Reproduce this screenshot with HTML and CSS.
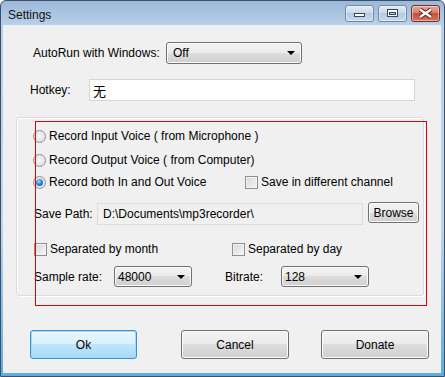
FILE: index.html
```html
<!DOCTYPE html>
<html lang="en">
<head>
    <meta charset="UTF-8">
    <title>Settings</title>
    <link rel="stylesheet" href="styles.css">
</head>
<body>
    <div class="window">
        <div class="titlebar">
            <span class="title">Settings</span>
            <div class="caption-buttons">
                <div class="cap">
                    <svg width="27" height="15" viewBox="0 0 27 15"><rect x="8.5" y="7.5" width="10" height="3" fill="#fff" stroke="#34475c"/></svg>
                </div>
                <div class="cap">
                    <svg width="27" height="15" viewBox="0 0 27 15"><rect x="8.5" y="3.5" width="10" height="7" fill="#fff" stroke="#34475c"/><rect x="10.5" y="6.5" width="6" height="2" fill="#b9cce2" stroke="#34475c"/></svg>
                </div>
                <div class="cap close">
                    <svg width="27" height="15" viewBox="0 0 27 15"><path d="M8 3.5 L19 11 M19 3.5 L8 11" stroke="#5a1e16" stroke-width="4.5"/><path d="M8 3.5 L19 11 M19 3.5 L8 11" stroke="#fff" stroke-width="2.5"/></svg>
                </div>
            </div>
        </div>

        <div class="client">
            <div class="autorun-row">
                <span class="autorun-label">AutoRun with Windows:</span>
                <div class="combo combo-autorun"><span class="combo-text">Off</span><span class="arrow"></span></div>
            </div>

            <div class="hotkey-row">
                <span class="hotkey-label">Hotkey:</span>
                <div class="textbox hotkey-box">无</div>
            </div>

            <div class="group">
                <div class="opt-row">
                    <span class="radio"></span>Record Input Voice ( from Microphone )
                </div>
                <div class="opt-row">
                    <span class="radio"></span>Record Output Voice ( from Computer)
                </div>
                <div class="opt-row short">
                    <div class="both-cell"><span class="radio checked"></span>Record both In and Out Voice</div>
                    <span class="check"></span>Save in different channel
                </div>

                <div class="path-row">
                    <span class="path-label">Save Path:</span>
                    <div class="textbox path-box">D:\Documents\mp3recorder\</div>
                    <div class="btn browse">Browse</div>
                </div>

                <div class="check-row">
                    <div class="month-cell"><span class="check"></span>Separated by month</div>
                    <span class="check"></span>Separated by day
                </div>

                <div class="rate-row">
                    <span class="rate-label">Sample rate:</span>
                    <div class="combo combo-rate"><span class="combo-text">48000</span><span class="arrow"></span></div>
                    <span class="bitrate-label">Bitrate:</span>
                    <div class="combo combo-bitrate"><span class="combo-text">128</span><span class="arrow"></span></div>
                </div>
            </div>

            <div class="button-row">
                <div class="btn btn-default ok">Ok</div>
                <div class="btn cancel">Cancel</div>
                <div class="btn donate">Donate</div>
            </div>

            <!-- marcação vermelha por cima do grupo -->
            <div class="marker"></div>
        </div>
    </div>
</body>
</html>
```

FILE: styles.css
```css
body {
    margin: 0;
    font-family: "Liberation Sans", Arial, sans-serif;
    font-size: 12px;
    color: #000;
    background: #fff;
}

.window {
    width: 445px;
    height: 377px;
    box-sizing: border-box;
    border: 1px solid #3d5067;
    border-radius: 6px 6px 0 0;
    background: linear-gradient(#9db8d7, #b8d0e9 24px, #bfd5ec 60%, #5aaee3);
    display: flex;
    flex-direction: column;
}

/* barra de título */
.titlebar {
    height: 24px;
    display: flex;
    justify-content: space-between;
    padding: 0 4px 0 7px;
}

.title {
    padding-top: 7px;
    font-size: 12px;
    color: #111;
}

.caption-buttons {
    display: flex;
    gap: 4px;
    padding-top: 4px;
}

.cap {
    width: 29px;
    height: 17px;
    box-sizing: border-box;
    border: 1px solid #6f87a5;
    border-radius: 3px;
    background: linear-gradient(#e2ebf5, #cad9ea 45%, #b5c9e0 50%, #c8daee);
    box-shadow: inset 0 0 0 1px rgba(255, 255, 255, 0.45);
}

.cap svg {
    display: block;
}

.cap.close {
    border-color: #6e2f28;
    background: linear-gradient(#e8a595, #d5806e 45%, #c4513b 50%, #d6735b);
}

/* área do cliente */
.client {
    flex: 1;
    margin: 0 3px 3px 2px;
    background: #f0f0f0;
    position: relative;
    display: flex;
    flex-direction: column;
}

.autorun-row {
    display: flex;
    align-items: center;
    height: 22px;
    margin-top: 17px;
    padding-left: 30px;
}

.autorun-label {
    width: 133px;
}

.combo {
    box-sizing: border-box;
    height: 22px;
    display: flex;
    align-items: center;
    border: 1px solid #707070;
    border-radius: 3px;
    background: linear-gradient(#f2f2f2, #ebebeb 50%, #dddddd 50%, #cfcfcf);
    box-shadow: inset 0 0 0 1px #fbfbfb;
}

.combo-text {
    flex: 1;
}

.arrow {
    width: 0;
    height: 0;
    border-left: 4px solid transparent;
    border-right: 4px solid transparent;
    border-top: 4px solid #000;
    margin-right: 6px;
}

.combo-autorun {
    width: 136px;
    padding-left: 6px;
}

.hotkey-row {
    display: flex;
    align-items: center;
    height: 22px;
    margin-top: 15px;
    padding-left: 27px;
}

.hotkey-label {
    width: 59px;
}

.textbox {
    box-sizing: border-box;
    height: 22px;
    display: flex;
    align-items: center;
    border: 1px solid #d6d6d6;
}

.hotkey-box {
    width: 326px;
    padding-left: 3px;
    background: #fff;
    font-family: "Noto Sans CJK SC", "Liberation Sans", sans-serif;
    font-size: 13px;
}

/* grupo com as opções de gravação */
.group {
    box-sizing: border-box;
    width: 408px;
    height: 179px;
    margin: 16px 0 0 13px;
    padding: 6px 0 0 16px;
    border: 1px solid #d5dfe5;
    border-radius: 3px;
    box-shadow: inset 1px 1px 0 #fff, 1px 1px 0 #fff;
}

.opt-row {
    display: flex;
    align-items: center;
    height: 24px;
}

.opt-row.short {
    height: 20px;
}

.both-cell {
    width: 212px;
    display: flex;
    align-items: center;
}

.radio {
    width: 13px;
    height: 13px;
    box-sizing: border-box;
    border-radius: 50%;
    border: 1px solid #929292;
    background: radial-gradient(circle at 50% 45%, #f8f8f8, #d6d6d6);
    margin-right: 3px;
    position: relative;
}

.radio.checked::after {
    content: "";
    position: absolute;
    left: 2px;
    top: 2px;
    width: 7px;
    height: 7px;
    border-radius: 50%;
    background: radial-gradient(circle at 40% 35%, #9fe0ff, #2a8ad2 45%, #0d4e94);
}

.check {
    width: 13px;
    height: 13px;
    box-sizing: border-box;
    border: 1px solid #8f8f8f;
    background: linear-gradient(135deg, #d8d8d8, #f6f6f6);
    box-shadow: inset 0 0 0 1px #f4f4f4;
    margin-right: 3px;
}

.path-row {
    display: flex;
    align-items: center;
    height: 23px;
    margin-top: 10px;
}

.path-label {
    width: 63px;
    margin-left: 1px;
}

.path-box {
    width: 266px;
    padding-left: 5px;
    background: #f0f0f0;
    border-color: #dcdcdc;
}

.btn {
    box-sizing: border-box;
    display: flex;
    align-items: center;
    justify-content: center;
    border: 1px solid #707070;
    border-radius: 3px;
    background: linear-gradient(#f2f2f2, #ebebeb 50%, #dddddd 50%, #cfcfcf);
    box-shadow: inset 0 0 0 1px #fcfcfc;
}

.browse {
    width: 51px;
    height: 21px;
    margin-left: 5px;
    margin-bottom: 2px;
}

.check-row {
    display: flex;
    align-items: center;
    height: 20px;
    margin-top: 14px;
    padding-left: 1px;
}

.month-cell {
    width: 198px;
    display: flex;
    align-items: center;
}

.rate-row {
    display: flex;
    align-items: center;
    height: 21px;
    margin-top: 7px;
    padding-left: 1px;
}

.rate-label {
    width: 80px;
}

.combo-rate {
    width: 78px;
    height: 21px;
    padding-left: 3px;
}

.bitrate-label {
    width: 56px;
    margin-left: 33px;
}

.combo-bitrate {
    width: 88px;
    height: 21px;
    padding-left: 3px;
}

/* botões de baixo */
.button-row {
    display: flex;
    margin-top: 34px;
    padding-left: 27px;
}

.button-row .btn {
    height: 29px;
    width: 108px;
}

.ok {
    width: 107px !important;
}

.cancel {
    margin-left: 44px;
}

.donate {
    margin-left: 32px;
}

.btn-default {
    border-color: #3c8fd0;
    background: linear-gradient(#eaf6fd, #d9f0fc 50%, #bee6fd 50%, #a7d9f5);
    box-shadow: inset 0 0 0 1px #9edcf8;
}

.marker {
    position: absolute;
    left: 32px;
    top: 96px;
    width: 392px;
    height: 185px;
    box-sizing: border-box;
    border: 1px solid #e00000;
    pointer-events: none;
}
```
